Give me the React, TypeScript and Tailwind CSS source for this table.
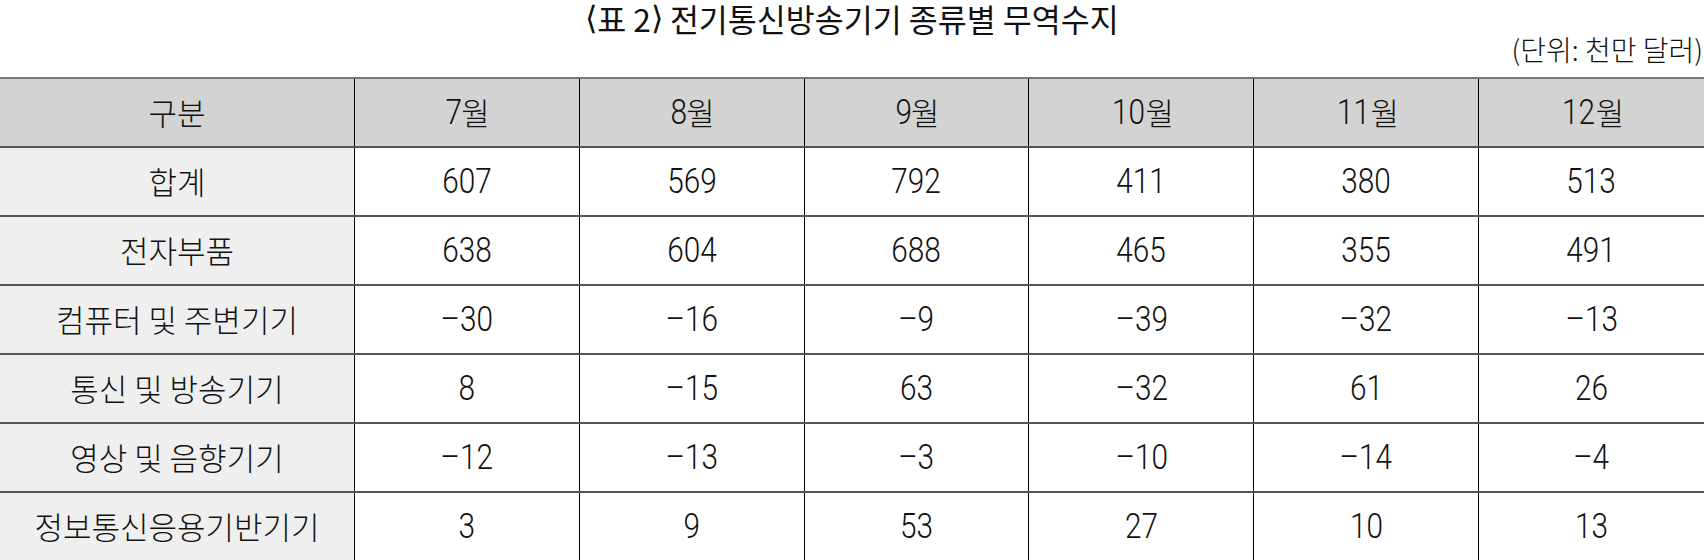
import React from "react";

const months = ["7", "8", "9", "10", "11", "12"];
const rows: [string, string[]][] = [
  ["합계", ["607", "569", "792", "411", "380", "513"]],
  ["전자부품", ["638", "604", "688", "465", "355", "491"]],
  ["컴퓨터 및 주변기기", ["–30", "–16", "–9", "–39", "–32", "–13"]],
  ["통신 및 방송기기", ["8", "–15", "63", "–32", "61", "26"]],
  ["영상 및 음향기기", ["–12", "–13", "–3", "–10", "–14", "–4"]],
  ["정보통신응용기반기기", ["3", "9", "53", "27", "10", "13"]],
];

const ko = "[font-family:'Noto_Sans_CJK_KR',sans-serif]";
const num = "[font-family:Roboto,'Noto_Sans_CJK_KR',sans-serif]";
const dv = "[font-family:'DejaVu_Sans',sans-serif]";

function Num({ children }: { children: React.ReactNode }) {
  return (
    <span className={`inline-block ${num} text-[35px] font-light leading-[40px] scale-x-[0.85]`}>{children}</span>
  );
}

export default function App() {
  return (
    <div className={`w-[1704px] h-[560px] bg-white text-[#111] overflow-hidden ${ko}`}>
      <div className="h-[37px] flex items-center justify-center text-[31.5px] font-normal leading-[37px] whitespace-pre">
        <span className={`${dv} font-light`}>⟨</span>
        <span>표 2</span>
        <span className={`${dv} font-light`}>⟩</span>
        <span> 전기통신방송기기 종류별 무역수지</span>
      </div>
      <div className="h-[24px] flex items-center justify-end text-[28px] font-light leading-[24px] pr-[1px]">
        (단위: 천만 달러)
      </div>
      <div className="mt-[16px] border-t-[2px] border-[#777]">
        <div className="grid grid-cols-[355px_repeat(6,1fr)] h-[69px] bg-[#d3d3d3] border-b-[2px] border-[#555]">
          <div className="flex items-center justify-center text-[31px] font-light border-r border-black">구분</div>
          {months.map((m, i) => (
            <div
              key={m}
              className={`flex items-center justify-center text-[31px] font-light ${i < 5 ? "border-r border-black" : ""}`}
            >
              <Num>{m}</Num>
              <span className="ml-[-2px]">월</span>
            </div>
          ))}
        </div>
        {rows.map(([label, vals]) => (
          <div
            key={label}
            className="grid grid-cols-[355px_repeat(6,1fr)] h-[69px] border-b-[2px] border-[#555]"
          >
            <div className="flex items-center justify-center text-[31px] font-light bg-[#efefef] border-r border-black">
              {label}
            </div>
            {vals.map((v, i) => (
              <div
                key={i}
                className={`flex items-center justify-center ${i < 5 ? "border-r border-black" : ""}`}
              >
                <Num>{v}</Num>
              </div>
            ))}
          </div>
        ))}
      </div>
    </div>
  );
}
